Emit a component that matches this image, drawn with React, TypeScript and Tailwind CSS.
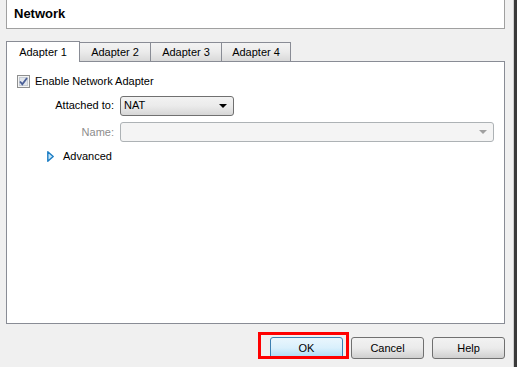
import React from 'react';

const font = { fontFamily: 'Tahoma, "Liberation Sans", Arial, sans-serif' };

const Tab: React.FC<{ label: string; active?: boolean; width: string }> = ({ label, active, width }) =>
  active ? (
    <div className={`${width} h-[21px] -mb-px relative z-10 bg-white border border-b-0 border-[#898c95] flex items-center justify-center text-[11px] text-black`}>
      {label}
    </div>
  ) : (
    <div className={`${width} h-[19px] border border-b-0 border-[#898c95] bg-gradient-to-b from-[#f3f3f3] via-[#ebebeb] to-[#d9d9d9] flex items-center justify-center text-[11px] text-black -ml-px first:ml-0`}>
      {label}
    </div>
  );

const Button: React.FC<{ label: string; primary?: boolean }> = ({ label, primary }) => (
  <button
    className={`w-[73px] h-[22px] rounded-[3px] border text-[11px] text-black ${
      primary
        ? 'border-[#3c7fb1] bg-gradient-to-b from-[#eaf6fd] via-[#d9f0fc] to-[#a7d9f5]'
        : 'border-[#707070] bg-gradient-to-b from-[#f2f2f2] via-[#ebebeb] to-[#cfcfcf]'
    }`}
  >
    {label}
  </button>
);

export default function App() {
  return (
    <div className="w-[517px] h-[367px] bg-[#f0f0f0] flex overflow-hidden" style={font}>
      <div className="w-[511px] flex flex-col">
        {/* Header */}
        <div className="ml-[6px] w-[499px] h-[29px] bg-white border border-t-0 border-[#a0a0a0] flex items-center pl-[7px] pb-[1px]">
          <span className="text-[13px] font-bold text-black">Network</span>
        </div>

        {/* Tabs */}
        <div className="ml-[6px] mt-[11px] flex items-end h-[21px]">
          <Tab label="Adapter 1" active width="w-[74px]" />
          <Tab label="Adapter 2" width="w-[72px]" />
          <Tab label="Adapter 3" width="w-[72px]" />
          <Tab label="Adapter 4" width="w-[70px]" />
        </div>

        {/* Panel */}
        <div className="ml-[6px] w-[499px] h-[263px] bg-white border border-[#898c95] text-[11px] text-black pt-[13px]">
          <div className="flex items-center gap-[5px] pl-[10px] h-[13px]">
            <svg width="13" height="13" viewBox="0 0 13 13">
              <rect x="0.5" y="0.5" width="12" height="12" fill="#f4f4f4" stroke="#8e8f8f" />
              <rect x="2.5" y="2.5" width="8" height="8" fill="#e2e6ec" stroke="#c6ccd4" />
              <path d="M3 6.5 L5.3 9.2 L10 3" fill="none" stroke="#4a5f97" strokeWidth="1.8" />
            </svg>
            <span>Enable Network Adapter</span>
          </div>

          <div className="flex items-center mt-[8px] h-[19px]">
            <span className="w-[107px] text-right">Attached to:</span>
            <div className="ml-[6px] w-[114px] h-[20px] rounded-[3px] border border-[#707070] bg-gradient-to-b from-[#f2f2f2] via-[#ebebeb] to-[#d6d6d6] flex items-center justify-between pl-[3px] pr-[6px]">
              <span>NAT</span>
              <svg width="8" height="4" viewBox="0 0 8 4">
                <path d="M0 0 H8 L4 4 Z" fill="#000" />
              </svg>
            </div>
          </div>

          <div className="flex items-center mt-[7px] h-[20px]">
            <span className="w-[107px] text-right text-[#8d8d8d]">Name:</span>
            <div className="ml-[6px] w-[374px] h-[20px] rounded-[3px] border border-[#adb2b5] bg-[#f4f4f4] flex items-center justify-end pr-[6px]">
              <svg width="8" height="4" viewBox="0 0 8 4">
                <path d="M0 0 H8 L4 4 Z" fill="#a0a0a0" />
              </svg>
            </div>
          </div>

          <div className="flex items-center mt-[6px] pl-[40px] h-[17px] gap-[9px]">
            <svg width="7" height="11" viewBox="0 0 7 11">
              <path d="M0.8 0.8 L6.2 5.5 L0.8 10.2 Z" fill="#c7e6f8" stroke="#1c7dc4" strokeWidth="1.4" strokeLinejoin="round" />
            </svg>
            <span>Advanced</span>
          </div>
        </div>

        {/* Buttons */}
        <div className="flex justify-end items-center gap-[8px] pr-[6px] mt-[13px]">
          <div className="relative flex">
            <Button label="OK" primary />
            <div className="absolute left-[-12px] top-[-5px] w-[91px] h-[27px] border-[3px] border-[#ff0000] pointer-events-none"></div>
          </div>
          <Button label="Cancel" />
          <Button label="Help" />
        </div>
      </div>
      <div className="w-[6px] h-full flex">
        <div className="w-[3px] border-r border-[#cfcfcf]"></div>
        <div className="w-[3px] bg-[#3a3a3a]"></div>
      </div>
    </div>
  );
}
